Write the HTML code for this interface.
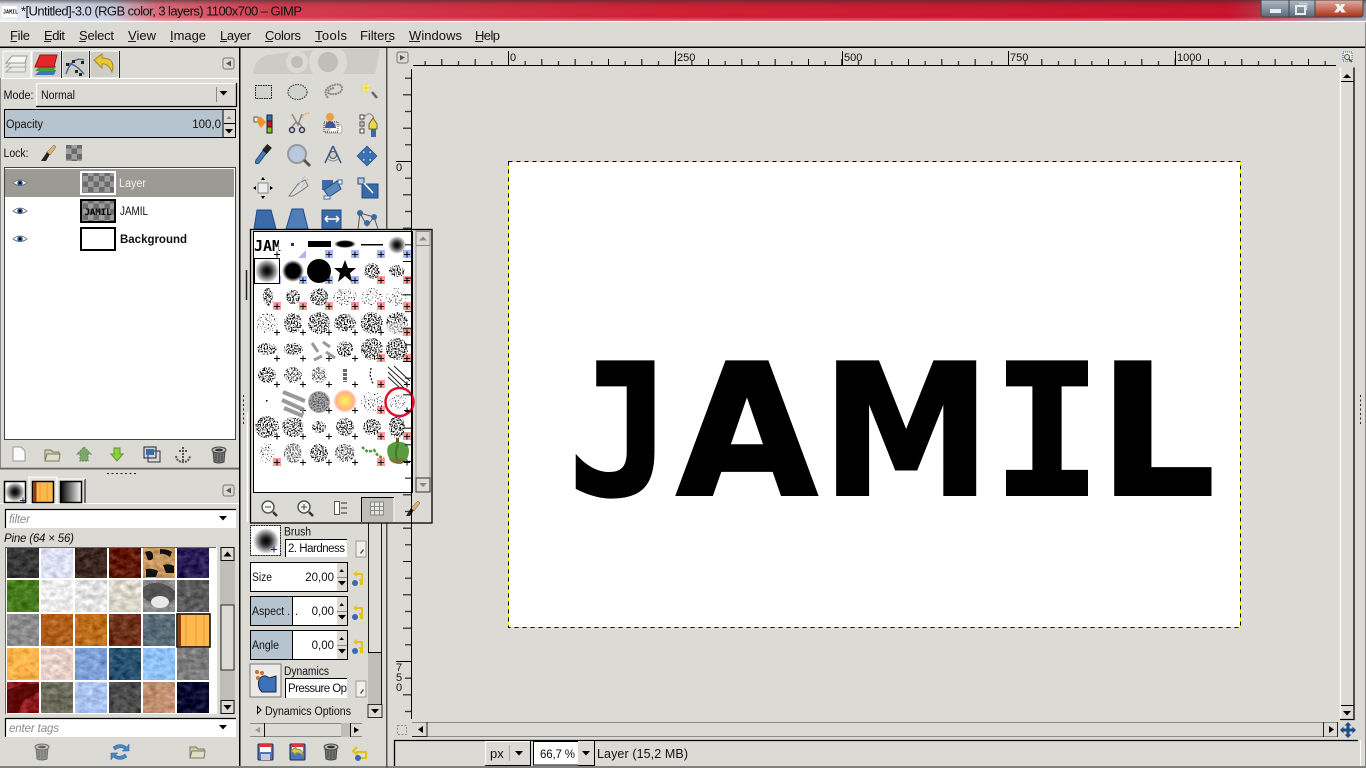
<!DOCTYPE html>
<html><head><meta charset="utf-8"><title>GIMP</title>
<style>
html,body{margin:0;padding:0;background:#dcdad5;width:1366px;height:768px;overflow:hidden}
svg{display:block;position:absolute;left:0;top:0}
text{font-family:"Liberation Sans",sans-serif;font-size:11.5px;fill:#111}
.m{font-size:13px}
.i{font-style:italic;fill:#8a8a90}
.r{font-size:11px;fill:#111}
.J{font-family:"DejaVu Sans Mono",monospace;font-weight:bold;font-size:182px;fill:#000;stroke:#000;stroke-width:3px}
.K{font-family:"DejaVu Sans",sans-serif;font-weight:bold;font-size:182px;fill:#000;stroke:#000;stroke-width:3px}
</style></head><body>
<svg width="1366" height="768" viewBox="0 0 1366 768" xmlns="http://www.w3.org/2000/svg">
<defs>
<clipPath id="wc1"><rect x="245" y="49" width="140" height="25"/></clipPath>
<linearGradient id="tb" x1="0" x2="1"><stop offset="0" stop-color="#eceef6"/><stop offset=".08" stop-color="#c4cce0"/><stop offset=".115" stop-color="#dc6a78"/><stop offset=".2" stop-color="#d23a4c"/><stop offset=".5" stop-color="#d01c30"/><stop offset=".9" stop-color="#c81028"/><stop offset="1" stop-color="#8c98a4"/></linearGradient>
<linearGradient id="tbv" x1="0" x2="0" y1="0" y2="1"><stop offset="0" stop-color="#333" stop-opacity=".6"/><stop offset=".2" stop-color="#333" stop-opacity=".08"/><stop offset=".8" stop-color="#fff" stop-opacity="0"/><stop offset="1" stop-color="#fff" stop-opacity=".35"/></linearGradient>
<linearGradient id="wb" x1="0" x2="0" y1="0" y2="1"><stop offset="0" stop-color="#b0bcc6"/><stop offset=".5" stop-color="#8494a2"/><stop offset="1" stop-color="#5c6a78"/></linearGradient>
<linearGradient id="wc" x1="0" x2="0" y1="0" y2="1"><stop offset="0" stop-color="#e0b0a8"/><stop offset=".5" stop-color="#c87060"/><stop offset="1" stop-color="#a83018"/></linearGradient>
<linearGradient id="bw" x1="0" x2="1"><stop offset="0" stop-color="#000"/><stop offset="1" stop-color="#fff"/></linearGradient>
<radialGradient id="bl"><stop offset="0" stop-color="#000"/><stop offset=".3" stop-color="#222"/><stop offset="1" stop-color="#000" stop-opacity="0"/></radialGradient>
<radialGradient id="bs"><stop offset="0" stop-color="#000"/><stop offset=".65" stop-color="#000"/><stop offset="1" stop-color="#000" stop-opacity="0"/></radialGradient>
<radialGradient id="gl"><stop offset="0" stop-color="#ffee70"/><stop offset=".45" stop-color="#ffd060"/><stop offset=".75" stop-color="#ffb090"/><stop offset="1" stop-color="#ffb090" stop-opacity="0"/></radialGradient>
<pattern id="chk" width="11" height="11" patternUnits="userSpaceOnUse"><rect width="11" height="11" fill="#9c9c9c"/><rect width="5.500" height="5.500" fill="#6c6c6c"/><rect x="5.500" y="5.500" width="5.500" height="5.500" fill="#6c6c6c"/></pattern>
<pattern id="chs" width="11" height="11" patternUnits="userSpaceOnUse"><rect width="11" height="11" fill="#a0a0a0"/><rect width="5.500" height="5.500" fill="#6a6a6a"/><rect x="5.500" y="5.500" width="5.500" height="5.500" fill="#6a6a6a"/></pattern>
<pattern id="hr" x="508" y="50" width="33.333" height="16" patternUnits="userSpaceOnUse"><path d="M.5 9V16M17.17 11V16" stroke="#000" fill="none"/></pattern>
<pattern id="vr" x="396" y="161" width="16" height="33.333" patternUnits="userSpaceOnUse"><path d="M7 .5H16M9 17.17H16" stroke="#000" fill="none"/></pattern>
<pattern id="pl" x="254" y="232" width="26" height="26" patternUnits="userSpaceOnUse"><path d="M20 22.500h6M23 19.500v6" stroke="#000" fill="none"/></pattern>
<filter id="sp" filterUnits="userSpaceOnUse" x="250" y="230" width="170" height="240"><feTurbulence type="fractalNoise" baseFrequency=".7" numOctaves="2" seed="4"/><feColorMatrix values="0 0 0 0 0 0 0 0 0 0 0 0 0 0 0 12 0 0 0 -6"/><feComposite in2="SourceGraphic" operator="in"/></filter>
<filter id="sl" filterUnits="userSpaceOnUse" x="250" y="230" width="170" height="240"><feTurbulence type="fractalNoise" baseFrequency=".7" numOctaves="2" seed="9"/><feColorMatrix values="0 0 0 0 0 0 0 0 0 0 0 0 0 0 0 14 0 0 0 -8.8"/><feComposite in2="SourceGraphic" operator="in"/></filter>
<filter id="tx" filterUnits="userSpaceOnUse" x="0" y="540" width="220" height="180" color-interpolation-filters="sRGB"><feTurbulence type="fractalNoise" baseFrequency=".14 .2" numOctaves="3" seed="3"/><feColorMatrix values=".6 .4 0 0 0 .6 .4 0 0 0 .6 .4 0 0 0 0 0 0 0 1" result="n"/><feComposite in="SourceGraphic" in2="n" operator="arithmetic" k1="0" k2="1" k3=".5" k4="-.25"/><feComposite in2="SourceGraphic" operator="in"/></filter>
<g id="eye"><path d="M-7 0Q0-6 7 0Q0 5-7 0Z" fill="#fff" stroke="#666" stroke-width=".8"/><circle r="2.800" fill="#2a5a9a"/><circle r="1.200" fill="#000"/></g>
<path id="dn" d="M-4-2H4L0 2.500Z" fill="#000"/>
<g id="chain"><path d="M-5-3H3V3H0" fill="none" stroke="#e8c020" stroke-width="2"/><path d="M-2-6L-6-3L-2 0" fill="#e8c020"/><circle cx="-4" cy="6" r="3" fill="#3a6aa8"/><rect x="1" y="4" width="3" height="4" fill="#e8c020"/></g>
<g id="trash"><path d="M-6-5H6L5 7Q0 9-5 7Z" fill="#777" stroke="#444"/><ellipse cy="-5" rx="7" ry="3" fill="#bbb" stroke="#444"/><ellipse cy="-5" rx="4" ry="1.400" fill="#333"/><path d="M-3-1V6M0-1V7M3-1V6" stroke="#444"/></g>
<g id="fold"><path d="M-7-5H-1L1-3H7V6H-7Z" fill="#c8cfae" stroke="#777a60"/><path d="M-7 6L-5-1H8L7 6Z" fill="#dde0c4" stroke="#777a60"/></g>
</defs>

<rect width="1366" height="768" fill="#dcdad5"/>

<!-- title bar -->
<rect width="1366" height="21" fill="url(#tb)"/><rect width="1366" height="21" fill="url(#tbv)"/>
<rect x="2" y="6" width="15" height="11" fill="#fff"/><text x="3" y="13.500" style="font-size:5px;font-weight:bold;font-family:'DejaVu Sans Mono',monospace">JAMIL</text>
<text x="21" y="15.500" class="m" textLength="281" lengthAdjust="spacing">*[Untitled]-3.0 (RGB color, 3 layers) 1100x700 – GIMP</text>
<path d="M1261 0V14Q1261 17 1264 17H1289V0Z" fill="url(#wb)" stroke="#444"/><path d="M1289 0V17H1315V0Z" fill="url(#wb)" stroke="#444"/><path d="M1315 0V17H1360Q1363 17 1363 14V0Z" fill="url(#wc)" stroke="#444"/>
<rect x="1270" y="9" width="11" height="4" fill="#e8edf0"/>
<rect x="1296" y="6" width="9" height="8" fill="none" stroke="#e8edf0" stroke-width="2"/><path d="M1299 3.500H1306.500V10" fill="none" stroke="#c8d0d8" stroke-width="1.500"/>
<path d="M1335 4L1339 4L1340 6.500L1341.500 4H1345.500L1342.500 8L1346 12.500H1341.500L1340 10L1338 12.500H1334L1337.500 8Z" fill="#f4f4f4"/>
<rect y="21" width="1366" height="1" fill="#fff"/>

<!-- menu -->
<rect y="46.500" width="1366" height="1.500" fill="#000"/><rect x="1365" y="22" width="1" height="746" fill="#888"/>
<text class="m" y="40" x="10" textLength="20">File</text><text class="m" y="40" x="44" textLength="21">Edit</text><text class="m" y="40" x="79" textLength="35">Select</text><text class="m" y="40" x="128" textLength="28">View</text><text class="m" y="40" x="170" textLength="36">Image</text><text class="m" y="40" x="220" textLength="31">Layer</text><text class="m" y="40" x="265" textLength="36">Colors</text><text class="m" y="40" x="315" textLength="32">Tools</text><text class="m" y="40" x="360" textLength="35">Filters</text><text class="m" y="40" x="409" textLength="53">Windows</text><text class="m" y="40" x="475" textLength="25">Help</text>
<path d="M10.500 41.500H17M44 41.500H51M79 41.500H86M128 41.500H136M170 41.500H173M220 41.500H227M265 41.500H273M315 41.500H322M386 41.500H391M409 41.500H420M475 41.500H483" stroke="#222" fill="none"/>

<!-- left dock frame -->
<rect x="239" y="48" width="1.500" height="720" fill="#000"/>
<rect x="0" y="78" width="239" height="1" fill="#fff"/>
<path d="M0.500 78V468H239" fill="none" stroke="#888"/>
<!-- tabs -->
<path d="M3 78V51H31V78" fill="#e4e2dd" stroke="#fff"/>
<rect x="32" y="51" width="29" height="27" fill="#cfcdc8" stroke="#fff"/><rect x="62" y="51" width="27" height="27" fill="#cfcdc8" stroke="#fff"/><rect x="90" y="51" width="29" height="27" fill="#cfcdc8" stroke="#fff"/><path d="M61.500 51V78M89.500 51V78M119.500 51V78" stroke="#222"/>
<path d="M6 72L12 67H26L25 72Z" fill="#e8e8e8" stroke="#aaa"/><path d="M6 67L12 62H26L25 67Z" fill="#eee" stroke="#aaa"/><path d="M6 63L12 56H27L25 63Z" fill="#f8f8f8" stroke="#999"/>
<path d="M35 75L40 70H56L54 75Z" fill="#3a78b8"/><path d="M35 71L40 66H56L54 71Z" fill="#4e9a3c"/><path d="M35 67L40 55H57L54 67Z" fill="#e02828" stroke="#a01010"/>
<path d="M66 74Q72 56 84 60" fill="none" stroke="#4a6a98" stroke-width="1.500"/><path d="M66 64Q74 62 84 74" fill="none" stroke="#4a6a98" stroke-width="1.500"/><path d="M72 60h3v3h-3zM81 61h3v3h-3zM75 70h3v3h-3zM66 63h3v3h-3zM79 73h3v3h-3z" fill="#222"/>
<path d="M94 60L102 54V58Q116 58 112 72Q108 63 102 64V68Z" fill="#e8c838" stroke="#a88c10"/>
<rect x="223" y="58" width="11" height="11" rx="2" fill="#dcdad5" stroke="#777"/><path d="M231 60.500V66.500L226 63.500Z" fill="#555"/>
<!-- mode -->
<text x="3.500" y="99" textLength="30" lengthAdjust="spacingAndGlyphs">Mode:</text>
<rect x="36" y="83" width="200" height="23" fill="#dcdad5"/><path d="M36.500 106V83.500H236" stroke="#fff" fill="none"/><path d="M36 106.500H236.500V83" stroke="#000" fill="none" stroke-width="1.300"/>
<text x="41" y="99" textLength="34" lengthAdjust="spacingAndGlyphs">Normal</text><path d="M216.500 87V102" stroke="#888"/><use href="#dn" x="223.500" y="93"/>
<!-- opacity -->
<rect x="4.500" y="109.500" width="231" height="28" fill="#dcdad5" stroke="#000"/><rect x="5" y="110" width="217.500" height="27" fill="#b6c4d0"/><path d="M223 110V137" stroke="#000"/>
<text x="6" y="128" textLength="37" lengthAdjust="spacingAndGlyphs">Opacity</text><text x="221" y="128" text-anchor="end">100,0</text>
<path d="M226.500 119L229 116L231.500 119Z" fill="#888"/><rect x="224" y="123" width="11" height="1" fill="#000"/><use href="#dn" x="229" y="131"/>
<!-- lock -->
<text x="3.500" y="157" textLength="25" lengthAdjust="spacingAndGlyphs">Lock:</text>
<path d="M41 161L47 152L50 154L46 161Z" fill="#222"/><path d="M47 152L54 145L56 147L50 155Z" fill="#e8b070" stroke="#555" stroke-width=".5"/>
<rect x="66" y="145" width="16" height="16" fill="url(#chs)"/>
<!-- layers list -->
<rect x="4.500" y="167.500" width="231" height="272" fill="#fff" stroke="#444"/>
<rect x="5" y="169" width="229" height="28" fill="#9c9a94"/>
<use href="#eye" x="20" y="183"/><use href="#eye" x="20" y="211"/><use href="#eye" x="20" y="239"/>
<rect x="81" y="172" width="34" height="22" fill="url(#chk)" stroke="#fff" stroke-width="2"/>
<rect x="81" y="200" width="34" height="22" fill="url(#chk)" stroke="#000" stroke-width="2"/><text x="98" y="215" text-anchor="middle" style="font-family:'DejaVu Sans Mono',monospace;font-weight:bold;font-size:9px;fill:#000">JAMIL</text>
<rect x="81" y="228" width="34" height="22" fill="#fff" stroke="#000" stroke-width="2"/>
<text x="119" y="187" style="fill:#f0f0ee" textLength="27" lengthAdjust="spacingAndGlyphs">Layer</text>
<text x="120" y="215" textLength="28" lengthAdjust="spacingAndGlyphs">JAMIL</text>
<text x="120" y="243" style="font-weight:bold" textLength="67">Background</text>
<!-- layer buttons -->
<path d="M13 447H21L25 451V461H13Z" fill="#fbfbfb" stroke="#999"/>
<use href="#fold" x="52" y="455"/>
<path d="M84 447L91 454H88V461H80V454H77Z" fill="#7ea86a" stroke="#5d8a50" stroke-dasharray="2 1"/>
<path d="M114 448H120V454H123L117 461L111 454H114Z" fill="#8fd040" stroke="#5a9a20"/>
<rect x="144" y="447" width="12" height="11" fill="#d0d4dc" stroke="#223"/><rect x="148" y="451" width="12" height="11" fill="none" stroke="#334"/><rect x="146" y="449" width="8" height="6" fill="#3a6aa8"/>
<path d="M183 447V462M179 451H187M176 456Q177 462 183 462Q189 462 190 456" fill="none" stroke="#555" stroke-width="2" stroke-dasharray="2 1"/>
<use href="#trash" x="219" y="455"/>
<rect y="468" width="239" height="1.500" fill="#666"/>
<path d="M107 473.500h2m2.500 0h2m2.500 0h2m2.500 0h2m2.500 0h2m2.500 0h2m2.500 0h2" stroke="#222" fill="none"/>
<!-- dock 2 tabs -->
<rect y="503" width="239" height="1" fill="#fff"/>
<path d="M29 503V477H57V503" fill="#e4e2dd" stroke="#fff"/>
<rect x="4.500" y="481.500" width="21" height="21" fill="#fff" stroke="#000" stroke-width="1.500"/><circle cx="15" cy="492" r="10" fill="url(#bl)"/><path d="M20 500.500h6M23 497.500v6" stroke="#225" fill="none"/>
<rect x="32.500" y="481.500" width="21" height="21" fill="#fdb84e" stroke="#000" stroke-width="1.500"/><path d="M35 482V502" stroke="#903810" stroke-width="3"/><path d="M40 482V502M47 482V502" stroke="#e89a30"/>
<rect x="60.500" y="481.500" width="21" height="21" fill="url(#bw)" stroke="#000" stroke-width="1.500"/><path d="M85 479V503" stroke="#000"/><path d="M57.500 479H85" stroke="#fff"/>
<rect x="223" y="485" width="11" height="11" rx="2" fill="#dcdad5" stroke="#777"/><path d="M231 487.500V493.500L226 490.500Z" fill="#555"/>
<!-- filter -->
<rect x="5" y="509" width="231" height="19" fill="#fff"/><path d="M5.500 528V509.500H236" stroke="#000" fill="none" stroke-width="1.200"/>
<text x="9" y="523" class="i" textLength="21">filter</text><use href="#dn" x="223" y="518"/>
<text x="4" y="542" style="font-style:italic" textLength="70">Pine (64 × 56)</text>
<!-- patterns -->
<rect x="5" y="547" width="212" height="167" fill="#fff"/><path d="M5.500 714V547.500H216" stroke="#666" fill="none"/>
<g filter="url(#tx)">
<rect x="7" y="548" width="32" height="30" fill="#383838"/><rect x="41" y="548" width="32" height="30" fill="#dde0f2"/><rect x="75" y="548" width="32" height="30" fill="#3c2820"/><rect x="109" y="548" width="32" height="30" fill="#601808"/><rect x="143" y="548" width="32" height="30" fill="#c89a62"/><rect x="177" y="548" width="32" height="30" fill="#2a1c54"/>
<rect x="7" y="580" width="32" height="32" fill="#467a1c"/><rect x="41" y="580" width="32" height="32" fill="#ececec"/><rect x="75" y="580" width="32" height="32" fill="#e2e2e2"/><rect x="109" y="580" width="32" height="32" fill="#dad6ca"/><rect x="143" y="580" width="32" height="32" fill="#8c8c8c"/><rect x="177" y="580" width="32" height="32" fill="#5c5c5c"/>
<rect x="7" y="614" width="32" height="32" fill="#8c8c8c"/><rect x="41" y="614" width="32" height="32" fill="#b05e1c"/><rect x="75" y="614" width="32" height="32" fill="#bc6e1c"/><rect x="109" y="614" width="32" height="32" fill="#6c321c"/><rect x="143" y="614" width="32" height="32" fill="#5a6c78"/>
<rect x="7" y="648" width="32" height="32" fill="#fcb44c"/><rect x="41" y="648" width="32" height="32" fill="#e6d0c8"/><rect x="75" y="648" width="32" height="32" fill="#7fa0d6"/><rect x="109" y="648" width="32" height="32" fill="#28506e"/><rect x="143" y="648" width="32" height="32" fill="#90c2f8"/><rect x="177" y="648" width="32" height="32" fill="#7c7c7c"/>
<rect x="7" y="682" width="32" height="31" fill="#8c1a1c"/><rect x="41" y="682" width="32" height="31" fill="#6c6c5c"/><rect x="75" y="682" width="32" height="31" fill="#aac2f0"/><rect x="109" y="682" width="32" height="31" fill="#4c4c4c"/><rect x="143" y="682" width="32" height="31" fill="#c09070"/><rect x="177" y="682" width="32" height="31" fill="#0a0a30"/>
</g>
<path d="M145 552q7-3 8 3t-5 5zM160 549q8 0 12 3l-2 5q-6-4-10-3zM163 565q6-2 11 1v7h-8zM146 569q7-1 12 2l-2 6h-10z" fill="#111"/>
<path d="M143 587q16-10 32 4v8q-16 12-32-2z" fill="#222" opacity=".55"/><ellipse cx="160" cy="602" rx="9" ry="6" fill="#e8e8e8"/>
<path d="M7 690L22 684H39V692L24 700L18 713H7Z" fill="#400" opacity=".65"/>
<rect x="177" y="614" width="33" height="33" fill="#fdb84e" stroke="#000" stroke-width="1.500"/><path d="M179.500 615V646" stroke="#903810" stroke-width="3"/><path d="M186 615V646M196 615V646M204 615V646" stroke="#e89a30"/>
<!-- scrollbar -->
<rect x="220" y="547" width="15" height="167" fill="#bebdb6"/><rect x="221" y="605" width="13" height="65" fill="#dcdad5" stroke="#000" stroke-width=".8"/><rect x="221" y="547.500" width="13" height="13" fill="#dcdad5" stroke="#111"/><rect x="221" y="700.500" width="13" height="13" fill="#dcdad5" stroke="#111"/><path d="M223.500 556.500L227.500 551.500L231.500 556.500Z" fill="#000"/><path d="M223.500 705L227.500 710L231.500 705Z" fill="#000"/>
<!-- tags -->
<rect x="5" y="718" width="231" height="19" fill="#fff"/><path d="M5.500 737V718.500H236" stroke="#000" fill="none" stroke-width="1.200"/>
<text x="9" y="732" class="i" textLength="50">enter tags</text><use href="#dn" x="223" y="727"/>
<use href="#trash" x="42" y="752" opacity=".7"/>
<path d="M113 747Q120 742 127 747L129 744V751H122L125 749Q120 746 115 750ZM127 757Q120 762 113 757L111 760V753H118L115 755Q120 758 125 754Z" fill="#4a88c8" stroke="#2a5a98" stroke-width=".5"/>
<use href="#fold" x="197" y="752"/>
<rect y="766" width="1366" height="2" fill="#808080"/>

<!-- toolbox -->
<path d="M253 74Q254 60 267 55L320 49H380L375 74Z" fill="#cdcbc6"/>
<g clip-path="url(#wc1)"><circle cx="297" cy="62" r="11" fill="#dcdad5"/><circle cx="297" cy="62" r="6" fill="#c0beb9"/><circle cx="328" cy="62" r="19" fill="#dcdad5"/><circle cx="328" cy="62" r="10" fill="#c0beb9"/></g>
<rect x="397" y="52" width="11" height="11" rx="2" fill="#dcdad5" stroke="#777"/><path d="M400 55V60.500L405 57.500Z" fill="#555"/>
<rect x="386" y="48" width="1.500" height="720" fill="#555"/>
<path d="M243.500 395v2m0 2.500v2m0 2.500v2m0 2.500v2m0 2.500v2m0 2.500v2m0 2.500v2M388.500 395v2m0 2.500v2m0 2.500v2m0 2.500v2m0 2.500v2m0 2.500v2m0 2.500v2M1360.500 395v2m0 2.500v2m0 2.500v2m0 2.500v2m0 2.500v2m0 2.500v2m0 2.500v2" stroke="#222" fill="none"/>
<path d="M246.500 270V300" stroke="#222" stroke-width="1.500"/><path d="M247.500 412V522" stroke="#fff" stroke-width="1.500"/>
<!-- tools row 1 -->
<rect x="255.500" y="85.500" width="16" height="13" fill="#d0d2ce" stroke="#000" stroke-dasharray="1.500 1"/>
<ellipse cx="297.500" cy="92" rx="9.500" ry="7.500" fill="#d0d2ce" stroke="#222" stroke-dasharray="1.500 1"/>
<path d="M328 98Q322 90 331 86Q341 82 342 88Q342 95 329 94Q326 90 334 88" fill="none" stroke="#888" stroke-width="2" stroke-dasharray="2 .6"/>
<path d="M372 92L377 98" stroke="#666" stroke-width="2.500"/><circle cx="366" cy="88" r="3.500" fill="#ffee70"/><path d="M366 83v10M361 88h10" stroke="#eed030"/>
<!-- row 2 -->
<rect x="267" y="115" width="5" height="6" fill="#3a6aa8" stroke="#123"/><rect x="267" y="121" width="5" height="6" fill="#d01010" stroke="#123"/><rect x="267" y="127" width="5" height="6" fill="#80c020" stroke="#123"/><rect x="254" y="117" width="4" height="5" fill="#eee" stroke="#555"/><path d="M258 117H261L266 122L261 128L257 122Z" fill="#f09020"/>
<path d="M292 114L298 125L302 114M291 128L296 122M303 128L298 122" fill="none" stroke="#888" stroke-width="1.500"/><circle cx="292" cy="130" r="2.500" fill="#dcdad5" stroke="#335" stroke-width="1.500"/><circle cx="302" cy="130" r="2.500" fill="#dcdad5" stroke="#335" stroke-width="1.500"/><path d="M302 118Q304 113 310 113" fill="none" stroke="#e89020" stroke-dasharray="1.500 1"/>
<path d="M333 125H341Q343 130 341 133H326Z" fill="#fff" stroke="#aaa"/><circle cx="330" cy="117" r="4" fill="#e8a040"/><path d="M325 128Q325 122 330 121Q335 122 336 128Z" fill="#3a5a98"/><rect x="324" y="122" width="14" height="10" fill="none" stroke="#622" stroke-dasharray="1 1"/>
<path d="M360 115h4v4h-4zM360 122h4v4h-4zM360 129h4v4h-4z" fill="#fff" stroke="#444"/><path d="M362 119v10M364 117Q370 110 374 118" fill="none" stroke="#888"/><path d="M369 124L373 118L377 124V129H369Z" fill="#f0d840" stroke="#664"/><rect x="371" y="129" width="5" height="8" fill="#3a6aa8"/>
<!-- row 3 -->
<path d="M256 160L265 148L268 151L259 163Q254 165 256 160Z" fill="#4a7ab8" stroke="#2a4a78"/><rect x="264" y="145" width="6" height="8" fill="#222" transform="rotate(40 267 149)"/>
<circle cx="297" cy="154" r="9" fill="#b8c8de" stroke="#9a9a9a" stroke-width="2"/><path d="M304 160L310 166" stroke="#555" stroke-width="3"/>
<path d="M333 146L325 163M333 146L341 163" stroke="#3a5a88" stroke-width="1.500"/><circle cx="333" cy="155" r="3.500" fill="#ccc" stroke="#555"/><path d="M328 159Q333 163 338 159" fill="none" stroke="#888"/>
<path d="M367 146L372 151H369V153.500H371.500V150.500L377 156L371.500 161.500V158.500H369V161H372L367 166L362 161H365V158.500H362.500V161.500L357 156L362.500 150.500V153.500H365V151H362Z" fill="#3a72b8" stroke="#1f4b88" stroke-width=".6"/>
<!-- row 4 -->
<rect x="258" y="183" width="10" height="10" fill="#eee" stroke="#888"/><path d="M263 178v2M263 196v2M254 188h2M270 188h2" stroke="#000" stroke-width="2"/><path d="M261 180l2-3 2 3zM261 196l2 3 2-3zM256 186l-3 2 3 2zM270 186l3 2-3 2z" fill="#000"/>
<path d="M289 196L298 184L305 180L308 186L301 191L293 196Z" fill="#ddd" stroke="#777"/><path d="M298 186L305 176M301 188L308 179" stroke="#bbb"/>
<rect x="322" y="180" width="11" height="10" fill="#3a6aa8"/><path d="M329 197L324 190L337 181L341 189Z" fill="#5a8ac0" stroke="#2a4a78"/><path d="M324 196h6v3h-6zM338 180h4v4h-4z" fill="#fff" stroke="#3a6aa8"/>
<rect x="362" y="184" width="16" height="14" fill="#3a6aa8" stroke="#1f4b88"/><rect x="358" y="178" width="6" height="6" fill="#b8c8de" stroke="#1f4b88"/><path d="M364 183L373 193" stroke="#fff" stroke-width="1.500"/>
<!-- row 5 -->
<path d="M257 210H271L276 229H254Z" fill="#3a6aa8" stroke="#1f4b88"/>
<path d="M292 209H303L308 229H286Z" fill="#4f7eb8" stroke="#1f4b88"/>
<path d="M322 210H341V229H322Z" fill="#3a6aa8" stroke="#1f4b88"/><path d="M325 219H339M325 219l3-3M325 219l3 3M339 219l-3-3M339 219l-3 3" stroke="#fff" stroke-width="1.500" fill="none"/>
<path d="M360 213L374 217L367 226ZM360 213L358 229M374 217L378 229" fill="none" stroke="#555"/><circle cx="360" cy="213" r="3" fill="#3a6aa8"/><circle cx="374" cy="217" r="3" fill="#3a6aa8"/><circle cx="367" cy="223" r="3" fill="#3a6aa8"/>

<!-- tool options -->
<rect x="250.500" y="525.500" width="30" height="30" fill="#fff" stroke="#222" stroke-dasharray="2 .6"/><circle cx="266" cy="541" r="13" fill="url(#bl)"/><path d="M271 549.500h6M274 546.500v6" stroke="#225" fill="none"/>
<text x="284" y="535.500" textLength="27" lengthAdjust="spacingAndGlyphs">Brush</text>
<rect x="285" y="539" width="62" height="18" fill="#fff"/><path d="M285.500 557V539.500H347" stroke="#000" fill="none"/><text x="288" y="552" textLength="57">2. Hardness</text>
<rect x="356" y="541" width="10" height="16" fill="#efeeea" stroke="#999"/><path d="M360 553l3-4 1 1-3 4z" fill="#553"/>
<rect x="250.500" y="562.500" width="97" height="29" fill="#fff" stroke="#000"/><text x="252" y="581" textLength="20" lengthAdjust="spacingAndGlyphs">Size</text><text x="334" y="581" text-anchor="end">20,00</text>
<rect x="250.500" y="596.500" width="97" height="29" fill="#fff" stroke="#000"/><rect x="251" y="597" width="41.500" height="28" fill="#b6c4d0"/><path d="M292.500 597V625" stroke="#000"/><text x="252" y="615" textLength="38" lengthAdjust="spacingAndGlyphs">Aspect .</text><text x="295" y="615">.</text><text x="334" y="615" text-anchor="end">0,00</text>
<rect x="250.500" y="630.500" width="97" height="29" fill="#fff" stroke="#000"/><rect x="251" y="631" width="41.500" height="28" fill="#b6c4d0"/><path d="M292.500 631V659" stroke="#000"/><text x="252" y="649" textLength="27" lengthAdjust="spacingAndGlyphs">Angle</text><text x="334" y="649" text-anchor="end">0,00</text>
<rect x="337" y="563" width="10" height="28" fill="#dcdad5"/><rect x="337" y="597" width="10" height="28" fill="#dcdad5"/><rect x="337" y="631" width="10" height="28" fill="#dcdad5"/>
<path d="M337 577.500H347M337 611.500H347M337 645.500H347" stroke="#888"/>
<path d="M339.500 572L341.500 569L344 572ZM339.500 606L341.500 603L344 606ZM339.500 640L341.500 637L344 640Z" fill="#000"/>
<use href="#dn" x="342" y="583"/><use href="#dn" x="342" y="617"/><use href="#dn" x="342" y="651"/>
<use href="#chain" x="359" y="577"/><use href="#chain" x="359" y="611"/><use href="#chain" x="359" y="645"/>
<rect x="250" y="664" width="31" height="33" fill="#eceae6" stroke="#777"/><path d="M259 680Q263 673 269 678L276 676V692H262Q257 687 259 680Z" fill="#3a72b8" stroke="#224"/><circle cx="257" cy="672" r="2" fill="#c87030"/><circle cx="262" cy="673" r="2" fill="#c87030"/><circle cx="258" cy="678" r="2" fill="#c87030"/>
<text x="284" y="675" textLength="45" lengthAdjust="spacingAndGlyphs">Dynamics</text>
<rect x="285" y="678" width="62" height="20" fill="#fff"/><path d="M285.500 698V678.500H347" stroke="#000" fill="none"/><text x="288" y="692" textLength="59">Pressure Op</text>
<rect x="356" y="681" width="10" height="16" fill="#efeeea" stroke="#999"/><path d="M360 693l3-4 1 1-3 4z" fill="#553"/>
<path d="M257.500 706.500V713.500L261 710Z" fill="none" stroke="#000"/>
<text x="265" y="715" textLength="86" lengthAdjust="spacingAndGlyphs">Dynamics Options</text>
<!-- opts scrollbars -->
<rect x="368" y="520" width="14" height="198" fill="#dcdad5"/><rect x="368" y="652" width="14" height="52" fill="#bebdb6"/><path d="M368.500 520V652M381.500 520V718" stroke="#000" stroke-width=".9"/><path d="M368 652.500H382" stroke="#000"/>
<rect x="368" y="704.500" width="14" height="13" fill="#dcdad5" stroke="#000" stroke-width=".8"/><use href="#dn" x="375" y="711"/>
<rect x="250" y="723" width="112" height="14" fill="#dcdad5"/><path d="M250 723.500H362M250 736.500H362" stroke="#888"/><rect x="341" y="723" width="9" height="14" fill="#bebdb6"/><path d="M264.500 723V737M350.500 723V737" stroke="#111"/>
<path d="M260 727V733L255 730Z" fill="#999"/><path d="M354 727V733L359 730Z" fill="#000"/>
<!-- opts buttons -->
<rect x="258" y="744" width="15" height="16" rx="1" fill="#4a78b8" stroke="#224"/><rect x="260" y="744" width="11" height="3" fill="#e03030"/><rect x="260" y="747" width="11" height="5" fill="#fff"/><rect x="261" y="754" width="9" height="6" fill="#ccd"/>
<rect x="290" y="744" width="15" height="16" rx="1" fill="#4a78b8" stroke="#224"/><rect x="292" y="744" width="11" height="3" fill="#e03030"/><rect x="292" y="747" width="11" height="5" fill="#fff"/><path d="M291 751L296 747V749Q303 749 303 756Q300 752 296 753V755Z" fill="#e8c838" stroke="#886"/>
<use href="#trash" x="331" y="752"/>
<path d="M357 747L353 751L357 755V752H366V758H357" fill="none" stroke="#e0c020" stroke-width="2"/><circle cx="358" cy="758" r="3" fill="#3a6aa8"/>

<!-- brush popup -->
<rect x="250" y="229" width="182" height="294" fill="#dcdad5"/><rect x="250.500" y="229.500" width="181.500" height="293.500" fill="none" stroke="#000" stroke-width="1.300"/>
<rect x="253.500" y="231.500" width="159" height="261" fill="#fff" stroke="#000"/>
<!-- tinted corners -->
<path d="M325 250h8v8h-8zM351 250h8v8h-8zM377 250h8v8h-8zM403 250h8v8h-8zM273 276h8v8h-8zM299 276h8v8h-8zM325 276h8v8h-8zM351 276h8v8h-8z" fill="#a8b8ff"/>
<path d="M377 276h8v8h-8zM403 276h8v8h-8zM273 302h8v8h-8zM299 302h8v8h-8zM325 302h8v8h-8zM351 302h8v8h-8zM377 302h8v8h-8zM403 302h8v8h-8zM403 328h8v8h-8zM377 354h8v8h-8zM403 354h8v8h-8zM377 380h8v8h-8zM377 406h8v8h-8zM377 432h8v8h-8zM403 432h8v8h-8zM273 458h8v8h-8zM377 458h8v8h-8z" fill="#ff9a9a"/>
<rect x="254" y="232" width="158" height="234" fill="url(#pl)"/>
<rect x="299" y="250" width="8" height="8" fill="#fff"/><path d="M298 258h8v-8z" fill="#a8b8ff"/>
<rect x="273" y="406" width="8" height="8" fill="#fff"/>
<!-- row 0 -->
<text x="254" y="251" style="font-family:'DejaVu Sans Mono',monospace;font-weight:bold;font-size:15px;fill:#000">JAM</text><rect x="279" y="233" width="12" height="17" fill="#fff"/>
<rect x="291" y="243" width="3" height="3" fill="#333"/><rect x="308" y="241" width="23" height="6" fill="#000"/><ellipse cx="345" cy="244" rx="11" ry="4" fill="url(#bs)"/><rect x="361" y="244" width="22" height="1.500" fill="#000"/><circle cx="397" cy="245" r="9" fill="url(#bl)"/>
<!-- row 1 -->
<rect x="254.500" y="258.500" width="25" height="25" fill="#fff" stroke="#000"/><circle cx="267" cy="271" r="12" fill="url(#bl)"/>
<circle cx="293" cy="271" r="11" fill="url(#bs)"/><circle cx="319" cy="271" r="12" fill="#000"/>
<path d="M345 260L348 268H356L350 273L352 282L345 276L338 282L340 273L334 268H342Z" fill="#000"/>
<g filter="url(#sp)" fill="#000"><ellipse cx="372" cy="271" rx="8" ry="8"/><ellipse cx="397" cy="271" rx="8" ry="6"/>
<ellipse cx="268" cy="297" rx="5" ry="9"/><ellipse cx="293" cy="297" rx="7" ry="7"/><ellipse cx="319" cy="297" rx="9" ry="9"/>
<ellipse cx="293" cy="323" rx="9" ry="10"/><ellipse cx="319" cy="323" rx="11" ry="11"/><ellipse cx="345" cy="323" rx="11" ry="9"/><ellipse cx="372" cy="323" rx="11" ry="11"/><path d="M386 323a11 11 0 0 1 22 0z"/><path d="M386 323a11 11 0 0 0 22 0z" opacity=".5"/>
<ellipse cx="267" cy="349" rx="10" ry="6"/><ellipse cx="293" cy="349" rx="10" ry="6"/><ellipse cx="345" cy="349" rx="8" ry="8"/><ellipse cx="372" cy="349" rx="11" ry="11"/><ellipse cx="397" cy="349" rx="11" ry="11"/>
<ellipse cx="267" cy="375" rx="9" ry="8"/><ellipse cx="293" cy="375" rx="9" ry="8" opacity=".8"/><ellipse cx="319" cy="375" rx="8" ry="8" opacity=".7"/>
<ellipse cx="267" cy="427" rx="12" ry="11"/><ellipse cx="293" cy="427" rx="11" ry="10"/><ellipse cx="319" cy="427" rx="7" ry="6"/><ellipse cx="345" cy="427" rx="9" ry="9"/><ellipse cx="372" cy="427" rx="9" ry="8"/><ellipse cx="397" cy="427" rx="8" ry="11"/>
<ellipse cx="293" cy="453" rx="9" ry="10" opacity=".7"/><ellipse cx="319" cy="453" rx="9" ry="9"/><ellipse cx="345" cy="453" rx="10" ry="9" opacity=".8"/></g>
<g filter="url(#sl)" fill="#000"><ellipse cx="345" cy="297" rx="12" ry="9"/><ellipse cx="372" cy="297" rx="11" ry="9"/><ellipse cx="397" cy="297" rx="11" ry="9"/><ellipse cx="267" cy="323" rx="11" ry="10"/><ellipse cx="372" cy="402" rx="11" ry="10"/><ellipse cx="398" cy="402" rx="9" ry="7"/><ellipse cx="267" cy="453" rx="8" ry="10"/></g>
<path d="M326 352L335 358M312 343L318 352M323 342L330 347M314 360L322 356" stroke="#999" stroke-width="3" fill="none"/>
<path d="M339 289L342 294" stroke="#aaa" stroke-width="2"/>
<path d="M345 369V382" stroke="#666" stroke-width="4" stroke-dasharray="3 1"/><path d="M371 368L370 375L373 384" stroke="#222" stroke-width="1.300" stroke-dasharray="2 1.500" fill="none"/>
<path d="M388 367L408 385M388 372L404 388M394 366L410 381M388 377L400 388" stroke="#222" fill="none"/>
<rect x="266" y="400" width="1.500" height="1.500" fill="#000"/>
<path d="M283 392L305 401M282 400L304 410M284 408L303 416" stroke="#888" stroke-width="4" fill="none" opacity=".85"/>
<circle cx="319" cy="402" r="11" fill="#888" opacity=".7"/>
<circle cx="345" cy="401" r="12" fill="url(#gl)"/>
<g filter="url(#sp)" fill="#000"><circle cx="319" cy="402" r="10" opacity=".5"/></g>
<path d="M362 447L368 452L374 450L378 456L384 458" stroke="#4a9a30" stroke-width="2.500" stroke-dasharray="3 1.500" fill="none"/>
<path d="M388 446Q395 440 400 442Q408 442 409 450Q409 461 401 464Q390 464 389 458Q386 452 388 446Z" fill="#5a9a40"/><path d="M396 438h3v5h-3z" fill="#6a5a20"/><path d="M398 444Q394 452 398 463" stroke="#3a7a28" stroke-width="2" fill="none"/><path d="M403 458Q405 462 401 464Q392 464 390 459" fill="#8a6a3a" opacity=".7"/>
<circle cx="399.500" cy="402" r="14" fill="none" stroke="#e0102a" stroke-width="2.500"/>
<!-- popup scroll -->
<rect x="416" y="231" width="14" height="261" fill="#dcdad5" stroke="#888" stroke-width=".8"/><rect x="416" y="231.500" width="14" height="14" fill="#dcdad5" stroke="#888"/><rect x="416" y="478" width="14" height="14" fill="#dcdad5" stroke="#333"/><path d="M419 240.500L423 236.500L427 240.500Z" fill="#888"/><path d="M419 483L423 487L427 483Z" fill="#888"/>
<!-- popup footer -->
<rect x="361" y="497" width="33" height="25" fill="#bebdb6"/><path d="M361.500 522V497.500H394" stroke="#000" fill="none"/><path d="M394 498V522" stroke="#fff"/>
<circle cx="268" cy="507" r="6" fill="#f4f4f4" stroke="#555" stroke-width="1.500"/><path d="M265 507h6" stroke="#444"/><path d="M273 512l4 4" stroke="#333" stroke-width="2.500"/>
<circle cx="304" cy="507" r="6" fill="#f4f4f4" stroke="#555" stroke-width="1.500"/><path d="M301 507h6M304 504v6" stroke="#444"/><path d="M309 512l4 4" stroke="#333" stroke-width="2.500"/>
<rect x="334.500" y="501.500" width="5" height="13" fill="#fff" stroke="#555"/><path d="M341 503h6M341 508h6M341 513h6" stroke="#666" stroke-width="1.500"/>
<path d="M370.500 502h13v13h-13zM370.500 506.500h13M370.500 510.500h13M374.500 502v13M379.500 502v13" fill="#e4e4e2" stroke="#888"/>
<path d="M406 516L411 508L414 510L410 516Z" fill="#222"/><path d="M411 508L418 501L420 503L414 511Z" fill="#e8b070" stroke="#555" stroke-width=".5"/>

<!-- rulers -->
<rect x="413" y="50" width="923" height="16" fill="url(#hr)"/><rect x="413" y="65" width="923" height="1" fill="#000"/>
<path d="M508.500 51V65M675.500 51V65M842.500 51V65M1008.500 51V65M1175.500 51V65" stroke="#000"/>
<text class="r" x="510" y="61">0</text><text class="r" x="677" y="61">250</text><text class="r" x="844" y="61">500</text><text class="r" x="1010" y="61">750</text><text class="r" x="1177" y="61">1000</text>
<rect x="396" y="69" width="16" height="650" fill="url(#vr)"/><rect x="411" y="69" width="1" height="650" fill="#000"/>
<path d="M396 161.500H411M396 661.500H411" stroke="#000"/>
<text class="r" x="396" y="171">0</text><text class="r" x="396" y="671">7</text><text class="r" x="396" y="681">5</text><text class="r" x="396" y="691">0</text>
<rect x="1343" y="52" width="9" height="9" fill="#eee" stroke="#35a" stroke-dasharray="1 1"/><circle cx="1347" cy="57" r="2.500" fill="#ddd" stroke="#555"/><path d="M1349 59l3 3" stroke="#444" stroke-width="1.500"/>

<!-- canvas -->
<rect x="508.500" y="161.500" width="732" height="466" fill="#fff" stroke="#ff0"/><rect x="508.500" y="161.500" width="732" height="466" fill="none" stroke="#000" stroke-dasharray="4 4"/>
<text transform="translate(620,494.500) scale(.95,1)" text-anchor="middle" class="J">J</text>
<text transform="translate(676.500,494.500)" class="K">A</text>
<text transform="translate(822,494.500) scale(.93,1)" class="K">M</text>
<text transform="translate(1047,494.500)" text-anchor="middle" class="J">I</text>
<text transform="translate(1099,494.500)" class="K">L</text>

<!-- main scrollbars -->
<rect x="1340.500" y="67.500" width="14" height="652" fill="#dcdad5"/><path d="M1340.500 67.500V719" stroke="#fff" stroke-width="1.300"/><path d="M1354 67.500V719.500H1340" stroke="#000" stroke-width="1.300" fill="none"/><path d="M1341 81.500H1354M1341 705.500H1354" stroke="#000"/>
<path d="M1343 78L1347 74L1351 78Z" fill="#000"/><path d="M1343 711L1347 715.500L1351 711Z" fill="#000"/>
<rect x="412" y="722" width="925" height="15" fill="#dcdad5"/><path d="M412 722.500H1338M412 736.500H1338" stroke="#888"/><path d="M412 736.500H427V722M1323.500 722V737M1337.500 722V737" stroke="#222" fill="none"/>
<path d="M423 726V733L418 729.500Z" fill="#000"/><path d="M1329 726V733L1334 729.500Z" fill="#000"/>
<rect x="397.500" y="725.500" width="9" height="9" fill="none" stroke="#888" stroke-dasharray="2 1.500"/>
<path d="M1348 722L1351.500 725.500H1349.500V728.500H1352.500V726.500L1356 730L1352.500 733.500V731.500H1349.500V734.500H1351.500L1348 738L1344.500 734.500H1346.500V731.500H1343.500V733.500L1340 730L1343.500 726.500V728.500H1346.500V725.500H1344.500Z" fill="#1f4b88"/>

<!-- status bar -->
<rect x="394" y="740" width="964" height="26" fill="#dcdad5"/><path d="M394.500 766V740.500H1358" stroke="#000" stroke-width="1.300" fill="none"/><path d="M1360.500 740V766" stroke="#fff"/>
<rect x="485" y="741" width="45" height="24" fill="#dcdad5"/><path d="M485.500 765V741.500H530" stroke="#fff" fill="none"/><path d="M485 765.500H530.500V741" stroke="#000" fill="none"/>
<text x="490" y="758" style="font-size:13px">px</text><path d="M509.500 745V761" stroke="#aaa"/><use href="#dn" x="519" y="753"/>
<rect x="533" y="741" width="45" height="24" fill="#fff"/><path d="M533.500 765V741.500H578M578 765H533" stroke="#000" fill="none"/>
<text x="540" y="758" textLength="35">66,7 %</text>
<rect x="578" y="741" width="17" height="24" fill="#dcdad5"/><path d="M578 765.500H594.500V741" stroke="#000" fill="none"/><use href="#dn" x="586" y="753"/>
<text x="597" y="758" style="font-size:12.500px" textLength="91">Layer (15,2 MB)</text>
</svg>
</body></html>
